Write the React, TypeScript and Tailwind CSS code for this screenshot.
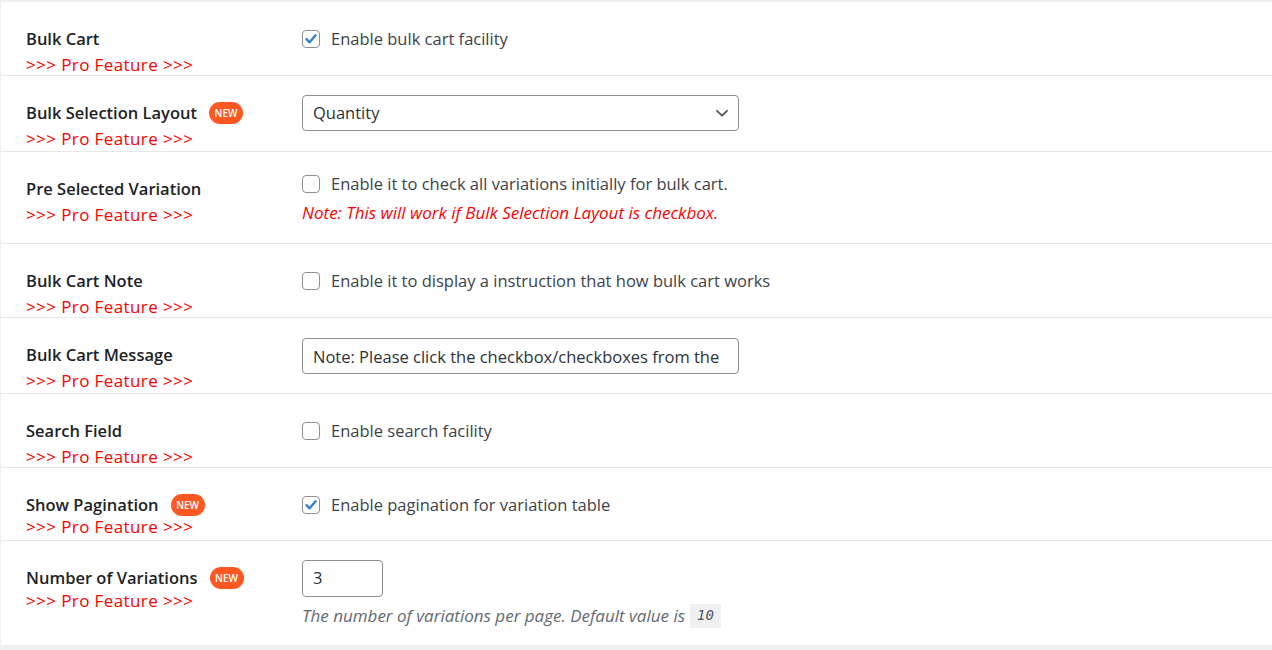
import type { ReactNode } from "react";

// Settings rows for the bulk-cart options panel.

function NewBadge() {
  return (
    <span className="ml-[12px] inline-flex h-[22px] w-[34px] items-center justify-center rounded-full bg-[#ff5722] text-[10px] font-semibold leading-none text-white">
      NEW
    </span>
  );
}

function Checkbox({ checked }: { checked?: boolean }) {
  return (
    <span className="inline-flex h-[18px] w-[18px] shrink-0 items-center justify-center rounded-[4px] border border-[#8c8f94] bg-white">
      {checked ? (
        <svg width="14" height="14" viewBox="0 0 14 14" fill="none">
          <path
            d="M2.5 7.2 L5.6 10.3 L11.6 3.2"
            stroke="#3582c4"
            strokeWidth="2.4"
            strokeLinecap="round"
            strokeLinejoin="round"
          />
        </svg>
      ) : null}
    </span>
  );
}

function CheckLine({ checked, children }: { checked?: boolean; children: ReactNode }) {
  return (
    <div className="flex h-[20px] items-center gap-[11px] text-[16.5px] text-[#3c434a]">
      <Checkbox checked={checked} />
      <span>{children}</span>
    </div>
  );
}

type RowProps = {
  label: string;
  badge?: boolean;
  height: string;
  proGap?: string;
  last?: boolean;
  children: ReactNode;
};

function Row({ label, badge, height, proGap = "mt-[6px]", last, children }: RowProps) {
  return (
    <div className={`flex ${height} ${last ? "" : "border-b border-[#e8e8e9]"}`}>
      <div className="w-[301px] shrink-0 pl-[25px] pt-[27px]">
        <div className="flex h-[20px] items-center text-[16.5px] font-semibold text-[#1d2327]">
          {label}
          {badge ? <NewBadge /> : null}
        </div>
        <div className={`${proGap} text-[17px] leading-[20px] tracking-[0.4px] text-[#ff0000]`}>
          &gt;&gt;&gt; Pro Feature &gt;&gt;&gt;
        </div>
      </div>
      <div className="flex-1">{children}</div>
    </div>
  );
}

export default function App() {
  return (
    <div
      className="min-h-[650px] bg-[#f0f0f1] pt-[2px] text-[16px]"
      style={{ fontFamily: '"Open Sans", "Noto Sans", sans-serif' }}
    >
      <div className="ml-px bg-white">
        <Row label="Bulk Cart" height="h-[74px]">
          <div className="pt-[27px]">
            <CheckLine checked>Enable bulk cart facility</CheckLine>
          </div>
        </Row>

        <Row label="Bulk Selection Layout" badge height="h-[76px]">
          <div className="pt-[19px]">
            <div className="flex h-[36px] w-[437px] items-center justify-between rounded-[4px] border border-[#8c8f94] pl-[10px] pr-[9px] text-[16.5px] text-[#2c3338]">
              <span>Quantity</span>
              <svg width="14" height="14" viewBox="0 0 14 14" fill="none">
                <path d="M2 4.8 L7 9.6 L12 4.8" stroke="#50575e" strokeWidth="1.8" strokeLinecap="round" strokeLinejoin="round" />
              </svg>
            </div>
          </div>
        </Row>

        <Row label="Pre Selected Variation" height="h-[92px]">
          <div className="pt-[22px]">
            <CheckLine>Enable it to check all variations initially for bulk cart.</CheckLine>
            <div className="mt-[9px] text-[17px] leading-[20px] italic text-[#ff0000]">
              Note: This will work if Bulk Selection Layout is checkbox.
            </div>
          </div>
        </Row>

        <Row label="Bulk Cart Note" height="h-[74px]">
          <div className="pt-[27px]">
            <CheckLine>Enable it to display a instruction that how bulk cart works</CheckLine>
          </div>
        </Row>

        <Row label="Bulk Cart Message" height="h-[76px]">
          <div className="pt-[20px]">
            <input
              readOnly
              value="Note: Please click the checkbox/checkboxes from the list to add products to cart"
              className="block h-[36px] w-[437px] rounded-[4px] border border-[#8c8f94] pl-[10px] pr-[16px] text-[16.5px] text-[#2c3338] outline-none"
              style={{ fontFamily: '"Open Sans", "Noto Sans", sans-serif' }}
            />
          </div>
        </Row>

        <Row label="Search Field" height="h-[74px]">
          <div className="pt-[27px]">
            <CheckLine>Enable search facility</CheckLine>
          </div>
        </Row>

        <Row label="Show Pagination" badge height="h-[73px]" proGap="mt-[2px]">
          <div className="pt-[27px]">
            <CheckLine checked>Enable pagination for variation table</CheckLine>
          </div>
        </Row>

        <Row label="Number of Variations" badge height="h-[104px]" proGap="mt-[3px]" last>
          <div className="pt-[19px]">
            <div className="flex h-[37px] w-[81px] items-center rounded-[4px] border border-[#8c8f94] pl-[10px] text-[16.5px] text-[#2c3338]">
              3
            </div>
            <div className="mt-[6px] flex items-center text-[17px] italic text-[#646970]">
              The number of variations per page. Default value is
              <code
                className="ml-[5px] inline-flex h-[24px] items-center bg-[#f0f0f1] px-[7px] text-[14px] text-[#50575e]"
                style={{ fontFamily: '"DejaVu Sans Mono", monospace', fontStyle: "italic" }}
              >
                10
              </code>
            </div>
          </div>
        </Row>
      </div>
    </div>
  );
}
